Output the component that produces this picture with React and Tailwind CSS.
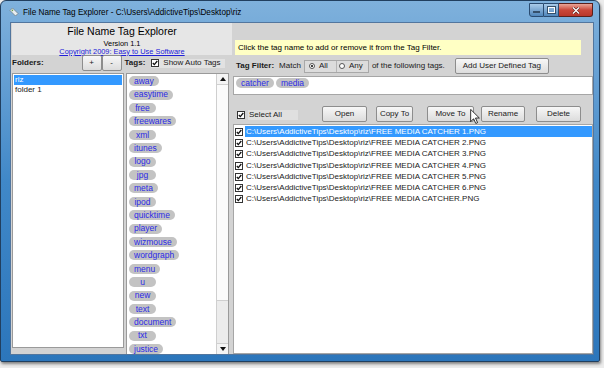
import React from 'react'

const tags = ['away', 'easytime', 'free', 'freewares', 'xml', 'itunes', 'logo', 'jpg', 'meta', 'ipod', 'quicktime', 'player', 'wizmouse', 'wordgraph', 'menu', 'u', 'new', 'text', 'document', 'txt', 'justice']

const base = 'C:\\Users\\AddictiveTips\\Desktop\\riz\\FREE MEDIA CATCHER'
const files = ['1', '2', '3', '4', '5', '6'].map((n) => `${base} ${n}.PNG`).concat(`${base}.PNG`)

function Check() {
  return (
    <span className="w-[8px] h-[8px] shrink-0 bg-white border border-[#333] flex items-center justify-center">
      <svg width="6" height="6" viewBox="0 0 6 6">
        <path d="M0.8 3 L2.3 4.6 L5.3 1" fill="none" stroke="#111" strokeWidth="1.3" />
      </svg>
    </span>
  )
}

function Pill({ children }) {
  return (
    <span className="inline-flex items-center justify-center h-[10px] min-w-[27px] px-[5px] rounded-full bg-[#c3c3c3] text-[#2b2be6] text-[8.5px] leading-none">
      {children}
    </span>
  )
}

function Btn({ className, children }) {
  return (
    <div className={`h-[16px] border border-[#8d8d8d] rounded-[2px] bg-gradient-to-b from-[#f7f7f7] to-[#dcdcdc] text-[8px] leading-none text-[#1a1a1a] flex items-center justify-center ${className}`}>
      {children}
    </div>
  )
}

function Radio({ on }) {
  return (
    <span className="w-[6px] h-[6px] rounded-full bg-white border border-[#555] flex items-center justify-center">
      {on && <span className="w-[2px] h-[2px] rounded-full bg-black" />}
    </span>
  )
}

export default function App() {
  return (
    <div className="w-[604px] h-[368px] bg-[#ececec] overflow-hidden font-['Liberation_Sans',Arial,sans-serif] text-[#1a1a1a]">
      <div className="w-[600px] h-[362px] border border-[#213f5f] rounded-t-[6px] rounded-b-[2px] bg-gradient-to-b from-[#7fb1dc] via-[#4088c8] to-[#2c76bb] flex flex-col shadow-[1px_2px_3px_rgba(0,0,0,0.45)]">
        {/* title bar */}
        <div className="h-[21px] flex items-start relative">
          <svg className="ml-[8px] mt-[6px]" width="10" height="10" viewBox="0 0 10 10">
            <path d="M1 3.5 L3.5 1 L9 6.5 L6.5 9 Z" fill="#e9eef0" stroke="#6d7f86" strokeWidth="0.8" />
            <circle cx="3.4" cy="3.4" r="0.8" fill="#6aa04a" />
          </svg>
          <span className="ml-[4px] mt-[8px] text-[8.2px] leading-none text-black">File Name Tag Explorer - C:\Users\AddictiveTips\Desktop\riz</span>
          <div className="ml-auto mr-[6px] mt-[2px] flex">
            <div className="w-[15px] h-[14px] rounded-bl-[3px] border border-[#2a4b70] bg-gradient-to-b from-[#a9cbe9] to-[#4f86bb] flex items-end justify-center pb-[3px]">
              <span className="w-[7px] h-[2px] bg-white border border-[#35506b]" />
            </div>
            <div className="w-[15px] h-[14px] border border-l-0 border-[#2a4b70] bg-gradient-to-b from-[#a9cbe9] to-[#4f86bb] flex items-center justify-center">
              <span className="w-[7px] h-[6px] border-[1.5px] border-white outline outline-1 outline-[#35506b]" />
            </div>
            <div className="w-[34px] h-[14px] rounded-br-[3px] border border-l-0 border-[#5a1f1a] bg-gradient-to-b from-[#e9a598] via-[#c9473a] to-[#b8372b] flex items-center justify-center">
              <svg width="8" height="7" viewBox="0 0 8 7">
                <path d="M1 0.5 L7 6.5 M7 0.5 L1 6.5" stroke="#4a1510" strokeWidth="2.4" />
                <path d="M1 0.5 L7 6.5 M7 0.5 L1 6.5" stroke="#fff" strokeWidth="1.4" />
              </svg>
            </div>
          </div>
        </div>

        {/* client area */}
        <div className="ml-[9px] mr-[5px] mb-[6px] flex-1 border border-[#52769e] bg-[#d3d3d3] flex overflow-hidden">
          {/* left column */}
          <div className="w-[221px] flex flex-col">
            <div className="ml-[1px] h-[33px] bg-[#e6e6e6] flex flex-col items-center">
              <span className="mt-[3px] text-[10.5px] leading-none text-black">File Name Tag Explorer</span>
              <span className="mt-[3px] text-[7.4px] leading-none text-black">Version 1.1</span>
              <span className="mt-[1px] text-[7.4px] leading-none text-[#2020d8] underline">Copyright 2009: Easy to Use Software</span>
            </div>
            <div className="h-[18px] flex items-center">
              <span className="ml-[1px] text-[8px] font-bold leading-none">Folders:</span>
              <Btn className="ml-[38px] w-[20px] h-[14px]">+</Btn>
              <Btn className="w-[20px] h-[14px]">-</Btn>
              <span className="ml-[3px] text-[8px] font-bold leading-none">Tags:</span>
              <div className="ml-[6px] w-[74px] h-[9px] bg-[#e2e2e2] flex items-center gap-[4px]">
                <Check />
                <span className="text-[8px] leading-none">Show Auto Tags</span>
              </div>
            </div>
            <div className="mt-[2px] flex-1 flex">
              <div className="ml-[1px] w-[112px] mb-[7px] bg-white border border-[#9a9a9a] flex flex-col pt-[1px] px-[1px]">
                <div className="h-[10px] bg-[#3399ff] text-white text-[8px] leading-none flex items-center pl-[1px]">riz</div>
                <div className="h-[10px] text-[8px] leading-none flex items-center pl-[1px]">folder 1</div>
              </div>
              <div className="ml-[2px] w-[103px] bg-white border border-[#9a9a9a] flex">
                <div className="flex-1 flex flex-col items-start gap-[3.4px] pl-[2px] pt-[2px]">
                  {tags.map((t) => (
                    <Pill key={t}>{t}</Pill>
                  ))}
                </div>
                <div className="w-[12px] border-l border-[#cfcfcf] bg-[#ececec] flex flex-col">
                  <div className="h-[11px] bg-[#f4f4f4] border-b border-[#d0d0d0] flex items-center justify-center">
                    <svg width="6" height="4" viewBox="0 0 6 4"><path d="M0 4 L3 0 L6 4 Z" fill="#111" /></svg>
                  </div>
                  <div className="h-[216px] bg-[#fbfbfb] border-b border-[#cfcfcf]" />
                  <div className="flex-1" />
                  <div className="h-[11px] bg-[#f4f4f4] border-t border-[#d0d0d0] flex items-center justify-center">
                    <svg width="6" height="4" viewBox="0 0 6 4"><path d="M0 0 L3 4 L6 0 Z" fill="#111" /></svg>
                  </div>
                </div>
              </div>
            </div>
          </div>

          {/* right column */}
          <div className="flex-1 flex flex-col">
            <div className="h-[17px]" />
            <div className="ml-[3px] w-[346px] h-[15px] bg-[#ffffc4] flex items-center pl-[3px] text-[8px] leading-none text-black">
              Click the tag name to add or remove it from the Tag Filter.
            </div>
            <div className="mt-[2px] h-[18px] flex items-center text-[8px] leading-none">
              <span className="ml-[4px] font-bold">Tag Filter:</span>
              <span className="ml-[5px]">Match</span>
              <div className="ml-[3px] w-[65px] h-[13px] border border-[#a8a8a8] bg-[#dcdcdc] flex items-center">
                <div className="w-[32px] flex items-center gap-[4px] pl-[4px] border-r border-[#b5b5b5] h-full">
                  <Radio on />
                  <span>All</span>
                </div>
                <div className="flex items-center gap-[4px] pl-[2px]">
                  <Radio />
                  <span>Any</span>
                </div>
              </div>
              <span className="ml-[3px]">of the following tags.</span>
              <Btn className="ml-[10px] w-[94px]">Add User Defined Tag</Btn>
            </div>
            <div className="mt-[1px] ml-[1px] h-[19px] bg-white border border-[#a6a6a6] flex items-start gap-[2px] pt-[1px] pl-[2px]">
              <Pill>catcher</Pill>
              <Pill>media</Pill>
            </div>
            <div className="mt-[10px] h-[17px] flex items-center text-[8px] leading-none relative">
              <div className="ml-[5px] mt-[2px]"><Check /></div>
              <div className="ml-[3px] mt-[2px] w-[50px] h-[10px] bg-[#e0e0e0] flex items-center pl-[1px]">Select All</div>
              <Btn className="ml-[24px] w-[45px]">Open</Btn>
              <Btn className="ml-[9px] w-[37px]">Copy To</Btn>
              <Btn className="ml-[14px] w-[47px]">Move To</Btn>
              <Btn className="ml-[7px] w-[44px]">Rename</Btn>
              <Btn className="ml-[11px] w-[45px]">Delete</Btn>
              <svg className="absolute left-[238px] top-[4px]" width="10" height="15" viewBox="0 0 12 19">
                <path d="M0.5 0.5 L0.5 16 L4.2 12.3 L7 18.3 L9.3 17.3 L6.6 11.4 L11.5 11.4 Z" fill="#fff" stroke="#000" strokeWidth="1" />
              </svg>
            </div>
            <div className="mt-[2px] ml-[1px] flex-1 bg-white border border-[#a6a6a6] flex flex-col pt-[1px]">
              {files.map((f, i) => (
                <div key={f} className="h-[11.3px] flex items-center text-[8px] leading-none">
                  <div className="ml-[1px]"><Check /></div>
                  <div className={`ml-[2px] flex-1 h-full flex items-center pl-[1px] ${i === 0 ? 'bg-[#3399ff] text-white' : 'text-[#222]'}`}>{f}</div>
                </div>
              ))}
            </div>
          </div>
        </div>
      </div>
    </div>
  )
}
